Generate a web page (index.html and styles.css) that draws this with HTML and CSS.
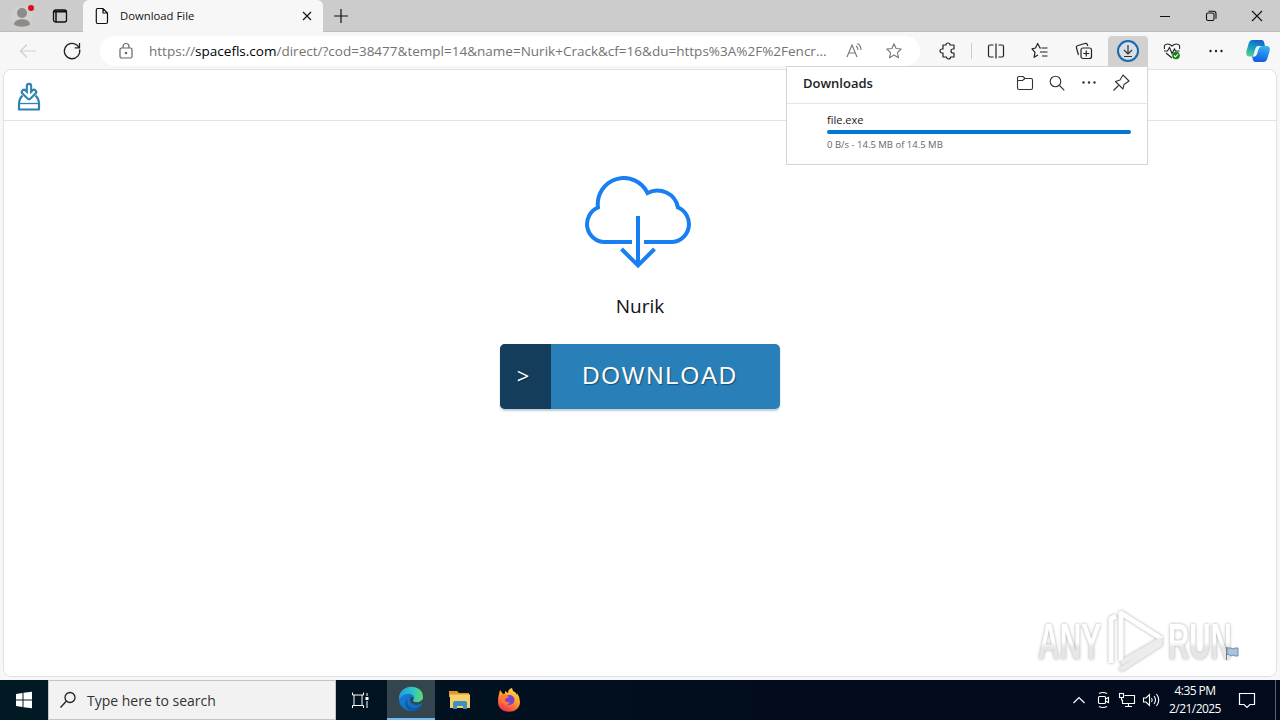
FILE: index.html
```html
<!DOCTYPE html>
<html lang="en">
  <head>
    <meta charset="UTF-8" />
    <meta name="viewport" content="width=device-width, initial-scale=1.0" />
    <title>Download File</title>
    <link rel="stylesheet" href="styles.css" />
  </head>
  <body>
    <header class="tab-strip">
      <div class="profile">
        <svg width="34" height="32" viewBox="0 0 34 32">
          <circle cx="16" cy="17" r="11" fill="#d2d0ce" />
          <circle cx="16" cy="13" r="5" fill="#8d8b89" />
          <path d="M8 24.500c0-7 16-7 16 0c-4 3-12 3-16 0z" fill="#8d8b89" />
          <circle cx="25" cy="8" r="3" fill="#e00b1c" />
        </svg>
      </div>
      <div class="workspaces">
        <svg width="16" height="16" viewBox="0 0 16 16" fill="none" stroke="#111" stroke-width="1.3">
          <rect x="1.500" y="2" width="13" height="12" rx="2" />
          <path d="M2 3.500h12" stroke-width="2" />
          <path d="M4 4v10" stroke-width="1.500" />
        </svg>
      </div>
      <div class="tab">
        <svg class="tab-icon" width="14" height="18" viewBox="0 0 14 18" fill="none" stroke="#111" stroke-width="1.2">
          <path d="M2.500 1.500h5.500l4.500 4.500v9q0 1.500-1.500 1.500H2.500q-1.200 0-1.200-1.500V3q0-1.500 1.200-1.500zM8 1.500V6h4.500" />
        </svg>
        <span class="tab-title">Download File</span>
        <svg width="10" height="10" viewBox="0 0 10 10" stroke="#111" stroke-width="1.2">
          <path d="M1 1l8 8M9 1l-8 8" />
        </svg>
      </div>
      <div class="new-tab">
        <svg width="14" height="14" viewBox="0 0 14 14" stroke="#111" stroke-width="1.2">
          <path d="M7 0v14M0 7h14" />
        </svg>
      </div>
      <div class="window-buttons">
        <svg width="46" height="32" viewBox="0 0 46 32" stroke="#111"><path d="M18 16.500h10" /></svg>
        <svg width="46" height="32" viewBox="0 0 46 32" fill="none" stroke="#111" stroke-width="1.100">
          <rect x="18.500" y="13" width="7.500" height="7.500" rx="1.500" />
          <path d="M20.500 11.300h5q2.500 0 2.500 2.500v5" />
        </svg>
        <svg width="46" height="32" viewBox="0 0 46 32" stroke="#111" stroke-width="1.100"><path d="M18 11l10 10M28 11l-10 10" /></svg>
      </div>
    </header>

    <nav class="toolbar">
      <div class="tool">
        <svg width="20" height="20" viewBox="0 0 20 20" fill="none" stroke="#cfcfcf" stroke-width="1.200"><path d="M18 10H2.500M9 3.500L2.500 10L9 16.500" /></svg>
      </div>
      <div class="tool">
        <svg width="20" height="20" viewBox="0 0 20 20" fill="none" stroke="#222" stroke-width="1.300"><path d="M17.600 8.500A7.700 7.700 0 1 1 14.800 4l2.600 2.600M17.500 2v4.800h-4.800" /></svg>
      </div>
      <div class="address-bar">
        <svg class="lock" width="16" height="18" viewBox="0 0 16 18" fill="none" stroke="#666" stroke-width="1.200">
          <rect x="2" y="6" width="12" height="10" rx="1.500" />
          <path d="M5 6V4.500a3 3 0 0 1 6 0V6" />
          <circle cx="8" cy="11" r=".7" fill="#666" />
        </svg>
        <span class="url">https://<b>spacefls.com</b>/direct/?cod=38477&amp;templ=14&amp;name=Nurik+Crack&amp;cf=16&amp;du=https%3A%2F%2Fencr...</span>
        <div class="address-tool">
          <svg width="20" height="20" viewBox="0 0 20 20" fill="none" stroke="#777" stroke-width="1.100"><path d="M3 16L8 4L13 16M4.700 12h6.600M12 5q2 1.500 2 4M13.500 2.500q3.500 2 3.500 6.500" /></svg>
        </div>
        <div class="address-tool">
          <svg width="18" height="18" viewBox="0 0 20 20" fill="none" stroke="#777" stroke-width="1.200" stroke-linejoin="round"><path d="M10 2l2.300 5.200 5.700.6-4.200 3.900 1.200 5.700-5-2.900-5 2.900 1.200-5.700L2 7.800l5.700-.6z" /></svg>
        </div>
      </div>
      <div class="tool first">
        <svg width="20" height="20" viewBox="0 0 20 20" fill="none" stroke="#222" stroke-width="1.200" stroke-linejoin="round"><path d="M5 4h3a2 2 0 0 1 4 0h4v4h-1a2 2 0 0 0 0 4h1v4h-3.500a2 2 0 0 1-4 0H5v-4H4a2 2 0 0 1 0-4h1z" /></svg>
      </div>
      <div class="separator"></div>
      <div class="tool">
        <svg width="20" height="20" viewBox="0 0 20 20" fill="none" stroke="#222" stroke-width="1.200"><path d="M7.500 4H4q-1.500 0-1.500 1.500v9Q2.500 16 4 16h3.500M12.500 4H16q1.500 0 1.500 1.500v9q0 1.500-1.500 1.500h-3.500M10 2.500v15" /></svg>
      </div>
      <div class="tool">
        <svg width="20" height="20" viewBox="0 0 20 20" fill="none" stroke="#222" stroke-width="1.200" stroke-linejoin="round"><path d="M11.500 7H10L7.700 2.500L5.500 7l-3.500.8 3 3.500-.9 5L8 14M12 7h5.500M10 11h7.500M12 15h5.500" /></svg>
      </div>
      <div class="tool">
        <svg width="20" height="20" viewBox="0 0 20 20" fill="none" stroke="#222" stroke-width="1.200"><rect x="7" y="7" width="10.500" height="10.500" rx="2" /><path d="M12.250 9.500v6M9.250 12.500h6M4.500 14L2.500 7q-.5-2 1.500-2.500l7-2q2-.500 2.500 1.500l.3 1" /></svg>
      </div>
      <div class="tool active">
        <svg width="24" height="24" viewBox="0 0 24 24" fill="none">
          <circle cx="12" cy="12" r="10" fill="#d6e0e8" stroke="#1769b0" stroke-width="2" />
          <path d="M12 6V15M8 11l4 4 4-4M8 17.500h8" stroke="#3d3027" stroke-width="1.200" />
        </svg>
      </div>
      <div class="tool">
        <svg width="20" height="20" viewBox="0 0 20 20" fill="none" stroke="#222" stroke-width="1.100">
          <path d="M2.500 8Q1.500 3 5.500 3Q8 3 10 5q2-2 4.500-2Q18.500 3 17.500 8M4 12l6 5M2 10h3.500L7.500 6.500l2.500 6L12.500 8l1 2h4" />
          <circle cx="14" cy="14.500" r="3.800" fill="#13811b" stroke="none" />
          <path d="M12 14.500l1.500 1.500 2.500-3" stroke="#fff" />
        </svg>
      </div>
      <div class="tool">
        <svg width="16" height="6" viewBox="0 0 16 6" fill="#222"><circle cx="2.500" cy="3" r="1.200" /><circle cx="8" cy="3" r="1.200" /><circle cx="13.500" cy="3" r="1.200" /></svg>
      </div>
      <div class="copilot">
        <svg width="26" height="24" viewBox="0 0 26 24">
          <defs>
            <linearGradient id="copilotLeft" x1="0.500" y1="0" x2="0.200" y2="1"><stop offset="0" stop-color="#1565c8" /><stop offset=".5" stop-color="#16a4c1" /><stop offset="1" stop-color="#55d08c" /></linearGradient>
            <linearGradient id="copilotRight" x1="0.500" y1="0" x2="0.300" y2="1"><stop offset="0" stop-color="#36b1ee" /><stop offset="1" stop-color="#1258e2" /></linearGradient>
          </defs>
          <path d="M7.500 1h9q2 0 2.500 2l1 4h-4q-2 0-2.500 2l-2 6q-.7 2.500-3 2.500H5q-5 0-3.500-5.500l2-7Q4.500 1 7.500 1z" fill="url(#copilotLeft)" />
          <path d="M18.500 23h-8q-2 0-2.500-2l-1-3.500H9q2 0 2.500-2l2-6Q14.300 7 17 7h4.500q4.500 0 3 5.500l-2 6.500q-1 4-4 4z" fill="url(#copilotRight)" />
          <path d="M13 7h3.500q-2 0-2.700 2.500l-2 6q-.6 2-2.800 2H8l2.200-7.500Q11 7 13 7z" fill="#e9f6ff" />
        </svg>
      </div>
    </nav>

    <main class="page">
      <div class="site-header">
        <svg width="24" height="30" viewBox="0 0 24 30" fill="none" stroke="#2d83b1" stroke-width="2.200" stroke-linejoin="round">
          <path d="M5.500 13.500Q2 17 2 22v5.500h20V22q0-5-3.500-8.500" />
          <path d="M3 21.500h18" stroke-width="1.300" />
          <path d="M12 4v10M7 10l5 5 5-5" stroke-width="6.400" stroke-linecap="round" />
          <path d="M12 4v10M7 10l5 5 5-5" stroke="#fff" stroke-width="2.200" stroke-linecap="round" />
        </svg>
      </div>
      <section class="download">
        <svg class="cloud" width="110" height="96" viewBox="0 0 110 96" fill="none" stroke="#177ff2" stroke-width="4">
          <path d="M49 66H20.500A18 18 0 0 1 15 31.500A26.100 26.100 0 0 1 64.500 17A21 21 0 0 1 95 31.500A18 18 0 0 1 89.500 66H61" />
          <path d="M55 40v49M38.500 73L55 89.500L71.500 73" />
        </svg>
        <h1 class="file-name">Nurik</h1>
        <button class="download-button">
          <span class="arrow">&gt;</span>
          <span class="label">DOWNLOAD</span>
        </button>
      </section>
    </main>

    <aside class="downloads-panel">
      <div class="panel-header">
        <span class="panel-title">Downloads</span>
        <svg width="20" height="20" viewBox="0 0 20 20" fill="none" stroke="#333" stroke-width="1.100"><path d="M2.500 5q0-1.500 1.500-1.500h4L10 5.500h6q1.500 0 1.500 1.500v8q0 1.500-1.500 1.500H4q-1.500 0-1.500-1.500zM2.500 7.500h5l2.500-2" /></svg>
        <svg width="20" height="20" viewBox="0 0 20 20" fill="none" stroke="#333" stroke-width="1.100"><circle cx="8.500" cy="8.500" r="5.300" /><path d="M12.500 12.500l4.800 4.800" /></svg>
        <svg width="20" height="20" viewBox="0 0 20 20" fill="#333"><circle cx="4.500" cy="9.500" r="1.200" /><circle cx="10" cy="9.500" r="1.200" /><circle cx="15.500" cy="9.500" r="1.200" /></svg>
        <svg width="20" height="20" viewBox="0 0 20 20" fill="none" stroke="#333" stroke-width="1.100" stroke-linejoin="round"><path d="M12 2l6 6-5 3.500-1 4.500-7.500-7.500L9 7zM8 12l-5.500 5.500" /></svg>
      </div>
      <div class="panel-item">
        <p class="item-name">file.exe</p>
        <div class="progress"></div>
        <p class="item-status">0 B/s - 14.5 MB of 14.5 MB</p>
      </div>
    </aside>

    <div class="watermark">
      <svg width="240" height="76" viewBox="0 0 240 76">
        <defs>
          <linearGradient id="fade" x1="0" y1="0" x2="0" y2="1"><stop offset=".5" stop-color="#fff" /><stop offset=".6" stop-color="#e6e6e6" /></linearGradient>
        </defs>
        <g class="watermark-text" fill="url(#fade)">
          <text transform="translate(9 57) scale(.6 1)">ANY</text>
          <text transform="translate(139 57) scale(.59 1)">RUN</text>
        </g>
        <g class="watermark-logo" fill="none" stroke="#fff" stroke-width="5" stroke-linejoin="round">
          <path d="M82 61V17l5-3" />
          <path d="M91 68L133 41" stroke="#ececec" />
          <path d="M92 59V11L133 37" />
          <path d="M133 37L92 61" stroke="#ececec" />
        </g>
      </svg>
      <svg class="flag" width="14" height="16" viewBox="0 0 14 16"><path d="M1.500 2v13" stroke="#777" /><path d="M2 3h4l2 1 2-1h3v8h-3l-2-1-2 1-2-1.500H2z" fill="#a9c5dd" stroke="#6f8da8" /></svg>
    </div>

    <footer class="taskbar">
      <div class="start">
        <svg width="18" height="18" viewBox="0 0 18 18" fill="#fff"><path d="M1 3l6.500-1v6.500H1zM8.500 1.800L17 .8v7.700H8.500zM1 9.500h6.500V16L1 15zM8.500 9.500H17v7.700l-8.500-1z" /></svg>
      </div>
      <div class="search">
        <svg width="18" height="18" viewBox="0 0 18 18" fill="none" stroke="#222" stroke-width="1.300"><circle cx="11" cy="6.500" r="5" /><path d="M7.500 10L1.500 16.500" /></svg>
        <span>Type here to search</span>
      </div>
      <div class="app task-view">
        <svg width="18" height="18" viewBox="0 0 18 18" fill="none" stroke="#fff" stroke-width="1"><path d="M1.500 1.500v2.500h11V1.500M1.500 17v-2.500h11V17" /><path d="M3 4v10.500M11 4v10.500" /><path d="M16 2v3M16 10v7" /><path d="M14.500 6h3v3h-3z" fill="#fff" stroke="none" /></svg>
      </div>
      <div class="app edge">
        <svg width="26" height="26" viewBox="0 0 26 26">
          <defs>
            <linearGradient id="edgeTop" x1="0" y1=".4" x2="1" y2=".4"><stop offset="0" stop-color="#219be0" /><stop offset=".6" stop-color="#2fc5c8" /><stop offset="1" stop-color="#65db62" /></linearGradient>
            <linearGradient id="edgeBase" x1="0" y1="0" x2="1" y2="1"><stop offset="0" stop-color="#1782d9" /><stop offset="1" stop-color="#0f66b8" /></linearGradient>
          </defs>
          <circle cx="13" cy="13" r="12" fill="url(#edgeBase)" />
          <path d="M11 10q-4 5 0 10q4 5 12-.5Q18 27 11 24Q4 19 11 10z" fill="#0c59a4" />
          <path d="M1 13C1-3 25-3 25 11C25 16 20 18 16 16Q14 15 16 13C17 7 7 5 1 13z" fill="url(#edgeTop)" />
          <path d="M13 11q-2.500 4 1 6.500 4 2.500 9 0l1-.5 1.500-1-1-2.500q-3 3.500-8 2.500-3-1-1-3.500 0-2-2.500-1.500z" fill="#34464d" />
        </svg>
      </div>
      <div class="app">
        <svg width="24" height="20" viewBox="0 0 24 20">
          <path d="M1 1h8l2 2h10v4H1z" fill="#e09a24" />
          <path d="M2 4.500h20V18H2z" fill="#f8d06a" />
          <path d="M5 19v-6q0-2 2-2h10q2 0 2 2v6h-4v-3H9v3z" fill="#3f8fc2" />
        </svg>
      </div>
      <div class="app">
        <svg width="26" height="26" viewBox="0 0 26 26">
          <defs>
            <linearGradient id="fox" x1=".8" y1="0" x2=".3" y2="1"><stop offset="0" stop-color="#ffe34b" /><stop offset=".5" stop-color="#ff9823" /><stop offset="1" stop-color="#f12c55" /></linearGradient>
          </defs>
          <path d="M3 7l1-4 3 4 2-.5V4l3 2q0-4 4-5l1 3q3 1 4 4V6q3 4 3 9c0 13-22 13-22 0Q2 10 3 7z" fill="url(#fox)" />
          <circle cx="13.500" cy="13" r="5" fill="#7645d4" />
          <path d="M5 8q4-2 8 2l-4 2q0 4 5 3-3 5-7 1-3-4-2-8z" fill="#ff7b32" />
        </svg>
      </div>
      <div class="tray">
        <svg width="24" height="20" viewBox="0 0 24 20" fill="none" stroke="#fff" stroke-width="1.200"><path d="M6.500 13L12 7.500l5.500 5.500" /></svg>
        <svg width="24" height="20" viewBox="0 0 24 20" fill="none" stroke="#fff" stroke-width="1.100"><rect x="7.500" y="6.500" width="7" height="7" rx="1" /><path d="M14.500 9l3-1.500v5l-3-1.500M8 3.500q4-2 8 0M8 16.500q4 2 8 0" /></svg>
        <svg width="24" height="20" viewBox="0 0 24 20" fill="none" stroke="#fff" stroke-width="1.100"><path d="M9.500 5.500h10v8h-12v-4M13.500 13.500v3M10 16.500h7" /><rect x="4.500" y="3.500" width="4" height="4" /><path d="M6.500 7.500v3" /></svg>
        <svg width="24" height="20" viewBox="0 0 24 20" fill="none" stroke="#fff" stroke-width="1.100"><path d="M4.500 8v4h2.500l3.500 3.500v-11L7 8zM12.500 8q1.500 2 0 4M15 6q3 4 0 8M17.500 4q4.500 6 0 12" /></svg>
      </div>
      <div class="clock">
        <span>4:35 PM</span>
        <span>2/21/2025</span>
      </div>
      <div class="notifications">
        <svg width="18" height="18" viewBox="0 0 18 18" fill="none" stroke="#fff" stroke-width="1.200"><path d="M1.500 2.500h15v11H12l-3 3-3-3H1.500z" /></svg>
      </div>
    </footer>
  </body>
</html>
```
FILE: styles.css
```css
* {
  box-sizing: border-box;
  font-family: "Open Sans", "Noto Sans", sans-serif;
}
body {
  display: flex;
  flex-direction: column;
  height: 720px;
  margin: 0;
  overflow: hidden;
  background-color: #f7f7f7;
}
svg {
  display: block;
  flex: none;
}
.tab-strip {
  display: flex;
  height: 32px;
  background-color: #ccc;
  border-bottom: 1px solid #bcbcbc;
}
.profile {
  width: 40px;
  padding-left: 6px;
}
.workspaces {
  display: flex;
  align-items: center;
  justify-content: center;
  width: 40px;
}
.tab {
  display: flex;
  align-items: center;
  width: 240px;
  height: 32px;
  margin-left: 3px;
  padding: 0 11px 0 12px;
  background-color: #f7f7f7;
  border-radius: 6px 6px 0 0;
}
.tab-title {
  flex: 1;
  padding: 0 0 2px 11px;
  font-size: 11.3px;
  color: #111;
}
.new-tab {
  display: flex;
  align-items: center;
  justify-content: center;
  width: 35px;
}
.window-buttons {
  display: flex;
  margin-left: auto;
}
.toolbar {
  display: flex;
  align-items: center;
  height: 37px;
  padding: 0 0 0 6px;
}
.tool {
  display: flex;
  flex: none;
  align-items: center;
  justify-content: center;
  width: 44px;
  height: 30px;
}
.tool.first {
  margin-left: 6px;
}
.tool.active {
  width: 40px;
  margin: 0 2px;
  background-color: #d3d1d0;
  border-radius: 4px 4px 0 0;
}
.separator {
  width: 1px;
  height: 16px;
  margin: 0 2px 0 1px;
  background-color: #ccc;
}
.address-bar {
  display: flex;
  flex: none;
  align-items: center;
  width: 820px;
  height: 30px;
  margin-left: 6px;
  padding: 0 6px 0 18px;
  background-color: #fff;
  border-radius: 15px;
}
.url {
  flex: 1;
  padding-left: 15px;
  font-size: 13.52px;
  white-space: nowrap;
  color: #737373;
}
.url b {
  font-weight: 400;
  color: #000;
}
.address-tool {
  display: flex;
  flex: none;
  justify-content: center;
  width: 40px;
}
.copilot {
  display: flex;
  flex: none;
  justify-content: center;
  width: 40px;
}
.page {
  flex: 1;
  margin: 0 3px 3px;
  background-color: #fff;
  border: 1px solid #e1e1e1;
  border-radius: 8px;
}
.site-header {
  height: 51px;
  padding: 12px 13px;
  border-bottom: 1px solid #e2e2e2;
}
.download {
  display: flex;
  flex-direction: column;
  align-items: center;
}
.cloud {
  margin: 55px 4px 0 0;
}
.file-name {
  margin: 20px 0 24px;
  font-size: 19px;
  font-weight: 400;
  line-height: 28px;
  color: #111;
}
.download-button {
  display: flex;
  width: 280px;
  height: 65px;
  padding: 0;
  overflow: hidden;
  color: #fff;
  background-color: #2980b9;
  border: none;
  border-radius: 5px;
  box-shadow: 0 2px 2px rgba(41, 90, 120, 0.3);
  text-shadow: 1px 1px 1px rgba(0, 0, 0, 0.4);
  line-height: 64px;
}
.arrow {
  width: 51px;
  padding-right: 5px;
  font-size: 22px;
  line-height: 62px;
  background-color: #143e5b;
}
.label {
  flex: 1;
  padding-right: 11px;
  font-family: "Liberation Sans", Arial, sans-serif;
  font-size: 24px;
  letter-spacing: 1.8px;
}
/* flyout under the downloads button */
.downloads-panel {
  position: absolute;
  top: 66px;
  left: 786px;
  width: 362px;
  height: 99px;
  background-color: #fff;
  border: 1px solid #d5d5d5;
}
.panel-header {
  display: flex;
  align-items: center;
  gap: 12px;
  height: 37px;
  padding: 0 16px 4px;
  border-bottom: 1px solid #e5e5e5;
}
.panel-title {
  flex: 1;
  font-size: 13px;
  font-weight: 600;
  color: #222;
}
.panel-item {
  padding: 7px 16px 0 40px;
}
.panel-item p {
  margin: 0;
}
.item-name {
  font-size: 11px;
  line-height: 17px;
  color: #222;
}
.progress {
  height: 4px;
  margin: 2px 0 4px;
  background-color: #0078d4;
  border-radius: 2px;
}
.item-status {
  font-size: 9.5px;
  line-height: 14px;
  color: #666;
}
/* recorder logo floats over the page */
.watermark {
  position: absolute;
  top: 602px;
  left: 1029px;
}
.watermark-text {
  font-size: 50px;
  font-weight: 700;
  filter: drop-shadow(0 0 1.5px #aaa);
}
.watermark-text text {
  font-family: "Liberation Sans", Arial, sans-serif;
}
.watermark-logo {
  filter: drop-shadow(0 0 1.5px #aaa);
}
.flag {
  position: absolute;
  top: 43px;
  left: 196px;
}
.taskbar {
  display: flex;
  height: 40px;
  color: #fff;
  background: linear-gradient(90deg, #011a24, #020c1d 60%, #020b1c);
}
.start {
  display: flex;
  align-items: center;
  justify-content: center;
  width: 48px;
}
.search {
  display: flex;
  align-items: center;
  gap: 10px;
  width: 288px;
  padding: 0 11px 0 10px;
  font-size: 14px;
  color: #333;
  background-color: #f2f2f2;
  border: 1px solid #c5c5c5;
}
.app {
  display: flex;
  align-items: center;
  justify-content: center;
  width: 49px;
}
.task-view {
  width: 51px;
  padding-right: 3px;
}
.edge {
  width: 48px;
  background-color: #34464d;
  border-bottom: 2px solid #76b9ed;
}
.tray {
  display: flex;
  align-items: center;
  margin-left: auto;
}
.clock {
  display: flex;
  flex-direction: column;
  justify-content: center;
  align-items: center;
  width: 64px;
  font-size: 12px;
  letter-spacing: -0.55px;
  line-height: 18px;
}
.notifications {
  display: flex;
  align-items: center;
  justify-content: center;
  width: 49px;
  margin-right: 4px;
  padding-right: 9px;
  border-right: 1px solid #5b6470;
}
```
